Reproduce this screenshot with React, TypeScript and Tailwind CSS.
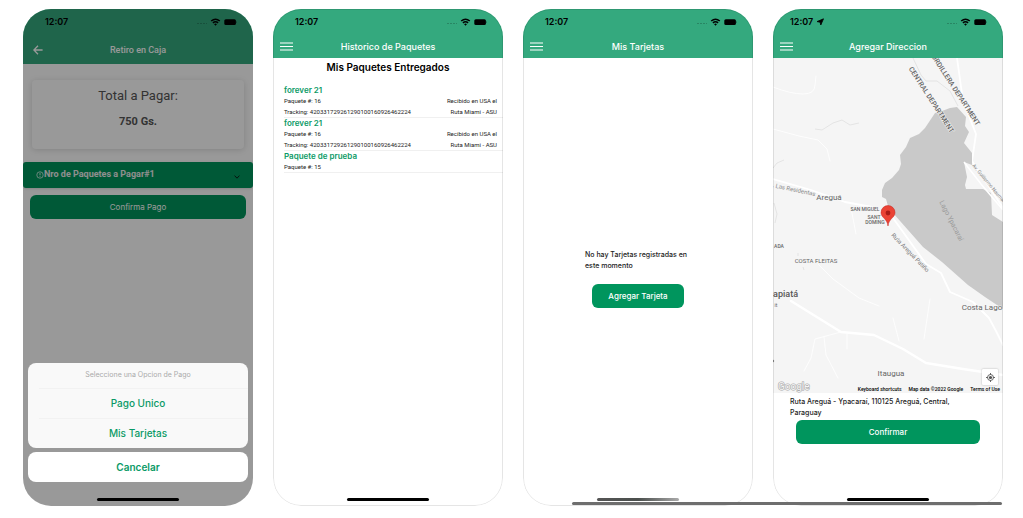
import type { ReactNode } from "react";

const inter = "font-['Inter','Liberation_Sans',sans-serif]";
const roboto = "font-['Roboto','Liberation_Sans',sans-serif]";

function StatusBar({ located = false }: { located?: boolean }) {
  return (
    <div className={`flex h-[26px] items-center justify-between pr-4 text-black ${located ? "pl-[17px]" : "pl-[22px]"}`}>
      <div className="flex items-center gap-[3px]">
        <span className="text-[9px] leading-3 font-semibold">12:07</span>
        {located && (
          <svg className="size-2" viewBox="0 0 8 8" aria-hidden="true">
            <path d="M7.5 .8 L4.8 7 L4.1 4.2 L1 3.6 Z" fill="currentColor" stroke="currentColor" strokeWidth=".8" strokeLinejoin="round" />
          </svg>
        )}
      </div>
      <svg className="h-2 w-10" viewBox="0 0 40 8" aria-hidden="true">
        <g fill="#000" opacity=".2">
          <rect x="0" y="5" width="2" height="1" />
          <rect x="3" y="5" width="2" height="1" />
          <rect x="6" y="5" width="2" height="1" />
          <rect x="9" y="5" width="1" height="1" />
        </g>
        <g fill="none" stroke="#000" strokeWidth="1.5">
          <path d="M14.2 3 Q18.5 -.6 22.8 3" />
          <path d="M15.9 4.9 Q18.5 2.7 21.1 4.9" />
        </g>
        <path d="M17.1 6.2 Q18.5 5 19.9 6.2 L18.5 7.7Z" fill="#000" />
        <rect x="27.3" y="1.2" width="11.6" height="5.8" rx="1.5" fill="#000" />
        <path d="M39.3 3v2.2q.7-.3.7-1.1T39.3 3" fill="#000" opacity=".5" />
      </svg>
    </div>
  );
}

function MenuIcon() {
  return (
    <svg className="h-[9px] w-[13px]" viewBox="0 0 13 9" aria-hidden="true">
      <path d="M0 1h13M0 4.500h13M0 8h13" stroke="#fff" strokeWidth="1.2" />
    </svg>
  );
}

function Header({ title, located }: { title: string; located?: boolean }) {
  return (
    <header className="bg-[#34a97e]">
      <StatusBar located={located} />
      <div className="grid h-[23px] grid-cols-[1fr_auto_1fr] items-center px-[7px]">
        <button type="button" aria-label="Menu" className="w-fit">
          <MenuIcon />
        </button>
        <h1 className="text-[9px] leading-3 font-medium text-white">{title}</h1>
      </div>
    </header>
  );
}

function Phone({ children, faded = false, outlined = true }: { children: ReactNode; faded?: boolean; outlined?: boolean }) {
  return (
    <section
      className={`relative flex aspect-[230/497] flex-col overflow-hidden rounded-[28px] bg-white ${inter}`}
    >
      {children}
      <div
        className={`pointer-events-none absolute inset-0 z-10 flex items-end justify-center rounded-[28px] border pb-1 ${outlined ? "border-black/10" : "border-transparent"}`}
      >
        <div
          className={`h-[3px] w-[82px] rounded-full ${faded ? "bg-linear-to-r from-[#555] via-[#4b4f4d] to-[#aaa]" : "bg-black"}`}
        />
      </div>
    </section>
  );
}

function PaymentScreen() {
  return (
    <Phone outlined={false}>
      <header className="bg-[#34a97e]">
        <StatusBar />
        <div className={`grid h-[29px] grid-cols-[1fr_auto_1fr] items-center px-[10px] ${roboto}`}>
          <button type="button" aria-label="Volver" className="w-fit">
            <svg className="size-[10px]" viewBox="0 0 10 10" aria-hidden="true">
              <path d="M5 .8 L.9 5 L5 9.2 M1 5H9.6" fill="none" stroke="#fff" strokeWidth="1.3" />
            </svg>
          </button>
          <h1 className="text-[9px] leading-3 font-medium text-white">Retiro en Caja</h1>
        </div>
      </header>
      <div className={`flex flex-col pt-4 ${roboto}`}>
        <div className="mx-[9px] flex h-[69px] flex-col items-center gap-[10px] rounded-sm pt-2 text-[#555] shadow-[0_1px_6px_rgba(0,0,0,0.15)]">
          <h2 className="text-[13px] leading-4">Total a Pagar:</h2>
          <p className="text-[11px] leading-4 font-bold">750 Gs.</p>
        </div>
        <button
          type="button"
          className="mt-[13px] flex h-[26px] items-center rounded-[3px] bg-[#00955d] px-[13px] text-[9px] font-bold text-[#eee] shadow-sm"
        >
          <svg className="size-2" viewBox="0 0 7 7" aria-hidden="true">
            <circle cx="3.5" cy="3.5" r="2.8" fill="none" stroke="#fff" strokeWidth=".6" />
            <path d="M3.5 1.8v2M3.5 4.5v.7" stroke="#fff" strokeWidth=".7" />
          </svg>
          Nro de Paquetes a Pagar#1
          <svg className="mt-1 ml-auto size-[6px]" viewBox="0 0 6 6" aria-hidden="true">
            <path d="M.6 1.6 L3 4.2 L5.4 1.6" fill="none" stroke="#111" strokeWidth=".9" />
          </svg>
        </button>
        <button type="button" className={`mx-[7px] mt-[7px] h-6 rounded-md bg-[#00955d] text-[8px] text-white ${inter}`}>
          Confirma Pago
        </button>
      </div>
      <div className="absolute inset-0 flex flex-col justify-end gap-1 bg-black/40 px-[5px] pb-6">
        <div className="flex flex-col rounded-lg bg-[#f9f9f9] text-[10px] font-medium text-[#0a9a66]">
          <p className="flex h-[25px] items-center justify-center text-[7px] font-normal text-[#aaa]">
            Seleccione una Opcion de Pago
          </p>
          <button type="button" className="ml-[11px] h-[30px] border-t border-[#f2f2f2] pr-[11px]">Pago Unico</button>
          <button type="button" className="ml-[11px] h-[30px] border-t border-[#f2f2f2] pr-[11px]">Mis Tarjetas</button>
        </div>
        <button type="button" className="h-[30px] rounded-lg bg-white text-[10px] font-semibold text-[#0a9a66]">
          Cancelar
        </button>
      </div>
    </Phone>
  );
}

const packages = [
  { name: "forever 21", id: 16, tracking: "420331729261290100160926462224" },
  { name: "forever 21", id: 16, tracking: "420331729261290100160926462224" },
  { name: "Paquete de prueba", id: 15 },
];

function HistoryScreen() {
  return (
    <Phone>
      <Header title="Historico de Paquetes" />
      <h2 className="pt-px text-center text-[10px] leading-4 font-semibold text-black">Mis Paquetes Entregados</h2>
      <ul className={`mt-[10px] pl-[11px] text-[6px] leading-[11px] text-[#222] ${roboto}`}>
        {packages.map((p, i) => (
          <li key={i} className="border-b border-[#f0f0f0] pr-[6px]">
            <h3 className={`text-[8px] leading-[10px] font-semibold text-[#0a9a66] ${inter}`}>{p.name}</h3>
            <div className="flex justify-between">
              <span>Paquete #: {p.id}</span>
              {p.tracking && <span>Recibido en USA el</span>}
            </div>
            {p.tracking && (
              <div className="flex justify-between">
                <span>Tracking: {p.tracking}</span>
                <span>Ruta Miami - ASU</span>
              </div>
            )}
          </li>
        ))}
      </ul>
    </Phone>
  );
}

function CardsScreen() {
  return (
    <Phone faded>
      <Header title="Mis Tarjetas" />
      <div className="flex flex-1 flex-col items-center justify-center pb-2">
        <p className="w-[106px] text-[7px] leading-[11px] font-medium text-[#222]">
          No hay Tarjetas registradas en este momento
        </p>
        <button type="button" className="mt-[13px] h-6 w-[92px] rounded-md bg-[#00955d] text-[8px] font-medium text-white">
          Agregar Tarjeta
        </button>
      </div>
    </Phone>
  );
}

function LakeMap() {
  return (
    <div className="relative bg-[#f5f5f5]">
      <svg className={`block w-full ${roboto}`} viewBox="0 0 230 335" role="img" aria-label="Mapa">
        <rect width="230" height="335" fill="#f5f5f5" />
        <g fill="none" stroke="#fff" strokeLinecap="round" strokeLinejoin="round">
          <path d="M0 29 Q18 36 30 36 T42 27 L43 18" strokeWidth=".8" />
          <path d="M0 71 L26 78 L45 82 L54 91 L57 103" strokeWidth=".8" />
          <path d="M0 121 L38 132 L72 144 L99 149 L120 160 L153 206 L168 215 L177 234 L200 244 L216 260 L223 273 L230 287" strokeWidth="1.8" />
          <path d="M18 243 L68 274 L101 277 L130 291 L153 305 L190 311 L230 317" strokeWidth="2.4" />
          <path d="M68 274 L42 281 L38 300 L31 313 M51 279 L53 297 L65 320 M74 276 L74 291" strokeWidth=".8" />
          <path d="M78 150 L83 176 M45 206 L60 221 L86 240 L106 248 M157 241 L151 281 M120 260 L126 283" strokeWidth=".8" />
          <path d="M184 0 L190 43 L203 76 L199 103 L230 150" strokeWidth="1.8" />
        </g>
        <g fill="none" stroke="#ddd" strokeWidth=".7">
          <path d="M42 71 L49 72 L60 65 L69 62 L77 67 L86 65" />
          <path d="M140 0 L148 17 L153 23 L164 23 L177 33 L185 48" />
          <path d="M0 110 L4 105 L11 102 M1 145 L4 156 L2 165 M25 195v3 M30 209l1 3" />
        </g>
        <path
          fill="#c9c9c9"
          d="M177 50 L169 53 L162 55 L152 70 L146 76 L137 80 L133 89 L127 97 L128 106 L126 112 L119 120 L112 125 L109 132 L109 139 L113 141 L115 148 L120 155 L135 172 L150 189 L169 204 L195 227 L212 239 L230 251 V164 L219 157 L218 135 L210 131 L193 131 L192 127 L194 119 L191 104 L199 107 L199 95 L191 85 L196 74 L192 68 L193 59 L184 49 Z"
        />
        <path d="M191 104 L208 126 L230 152" fill="none" stroke="#fff" strokeWidth="1.5" />
        <g fill="#666" stroke="#f5f5f5" strokeWidth="1" paintOrder="stroke" dominantBaseline="middle" textAnchor="middle">
          <text transform="translate(158 42) rotate(57)" fontSize="7" fontWeight="500">CENTRAL DEPARTMENT</text>
          <text transform="translate(205 67) rotate(57)" fontSize="7" fontWeight="500" textAnchor="end">CORDILLERA DEPARTMENT</text>
          <text transform="translate(200 107) rotate(50)" fontSize="5" fill="#888" textAnchor="start">Av. Guillermo Naumann</text>
          <text transform="translate(21 132) rotate(12)" fontSize="6" fill="#888">. Las Residentas</text>
          <text x="56" y="140" fontSize="8">Areguá</text>
          <text x="92" y="152" fontSize="5" fontWeight="500">SAN MIGUEL</text>
          <text x="101" y="160" fontSize="5" fontWeight="500">SANT</text>
          <text x="102" y="165" fontSize="5" fontWeight="500">DOMING</text>
          <text x="6" y="189" fontSize="5" fontWeight="500">ADA</text>
          <text x="43" y="203" fontSize="6">COSTA FLEITAS</text>
          <text transform="translate(137 195) rotate(46)" fontSize="6" fill="#777">Ruta Areguá Patiño</text>
          <text x="25" y="237" fontSize="9" fontWeight="500" textAnchor="end" fill="#555">apiatá</text>
          <text x="3" y="248" fontSize="5">it</text>
          <text x="209" y="250" fontSize="8">Costa Lago</text>
          <text x="118" y="316" fontSize="8">Itaugua</text>
          <text transform="translate(178 163) rotate(63)" fontSize="7" fill="#999" stroke="none">Lago Ypacaraí</text>
        </g>
        <circle cx="0" cy="303" r="1.2" fill="#888" />
        <path d="M115 168 C114 160 108 160 108 154.500 A7 7 0 0 1 122 154.500 C122 160 116 160 115 168Z" fill="#ea4335" stroke="#c5221f" strokeWidth=".5" />
        <circle cx="115" cy="155" r="2.400" fill="#a91c17" />
        <text x="5" y="332" fontSize="10" fill="#f5f5f5" stroke="#aaa" strokeWidth="1.200" paintOrder="stroke">Google</text>
      </svg>
      <button
        type="button"
        aria-label="Mi ubicación"
        className="absolute right-[5px] bottom-2 grid size-4 place-items-center rounded-[1px] bg-white shadow-[0_0_2px_rgba(0,0,0,0.3)]"
      >
        <svg className="size-[9px]" viewBox="0 0 10 10" aria-hidden="true">
          <circle cx="5" cy="5" r="3.300" fill="none" stroke="#555" />
          <circle cx="5" cy="5" r="1.800" fill="#555" />
          <path d="M5 0v2M5 8v2M0 5h2M8 5h2" stroke="#555" />
        </svg>
      </button>
      <div className={`absolute right-[3px] bottom-0 flex gap-[7px] text-[5px] leading-[7px] font-medium text-black ${roboto}`}>
        <button type="button">Keyboard shortcuts</button>
        <span>Map data ©2022 Google</span>
        <a href="#terms">Terms of Use</a>
      </div>
    </div>
  );
}

function AddressScreen() {
  return (
    <Phone>
      <Header title="Agregar Direccion" located />
      <LakeMap />
      <p className="pt-[3px] pr-10 pl-[17px] text-[7px] leading-[11px] font-medium text-[#222]">
        Ruta Areguá - Ypacaraí, 110125 Areguá, Central, Paraguay
      </p>
      <button type="button" className="mx-[23px] mt-[2px] h-6 shrink-0 rounded-md bg-[#00955d] text-[8px] font-medium text-white">
        Confirmar
      </button>
    </Phone>
  );
}

export default function App() {
  return (
    <main className="relative bg-white pt-[9px] pr-5 pb-3 pl-[23px]">
      <div className="grid grid-cols-4 gap-5">
        <PaymentScreen />
        <HistoryScreen />
        <CardsScreen />
        <AddressScreen />
      </div>
      <div className="absolute right-[21px] bottom-[13px] z-20 h-[3px] w-[42%] rounded-full bg-[#6e6e6e]" />
    </main>
  );
}
